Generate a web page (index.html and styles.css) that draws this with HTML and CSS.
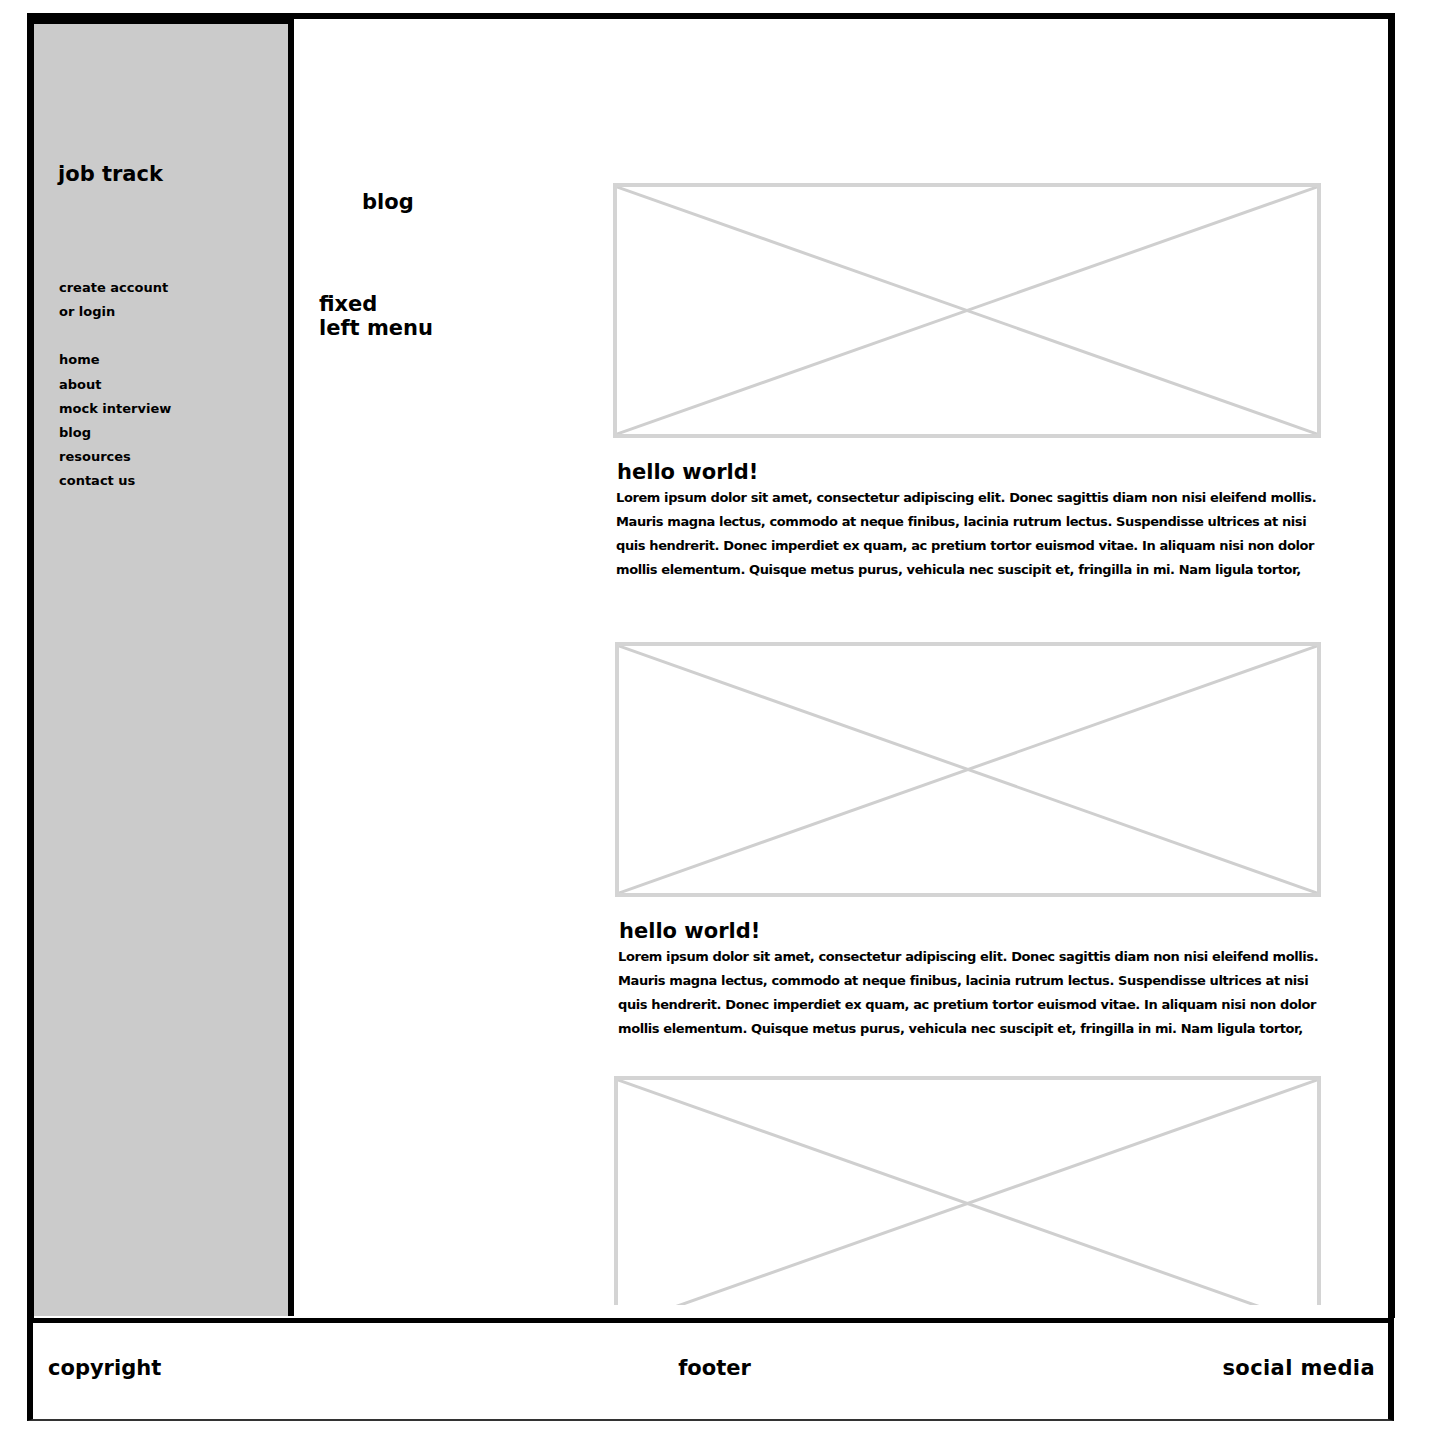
FILE: index.html
```html
<!DOCTYPE html>
<html lang="en">
<head>
    <meta charset="UTF-8">
    <meta name="viewport" content="width=device-width, initial-scale=1.0">
    <title>job track - blog</title>
    <link rel="stylesheet" href="styles.css">
</head>
<body>
    <div class="page">
        <div class="frame">
            <!-- fixed left menu -->
            <aside class="sidebar">
                <div class="logo">job track</div>
                <ul class="nav">
                    <li>create account</li>
                    <li>or login</li>
                    <li class="spacer"></li>
                    <li>home</li>
                    <li>about</li>
                    <li>mock interview</li>
                    <li>blog</li>
                    <li>resources</li>
                    <li>contact us</li>
                </ul>
            </aside>

            <main class="main">
                <div class="notes">
                    <h1 class="page-title">blog</h1>
                    <p class="note">fixed<br>left menu</p>
                </div>

                <div class="posts">
                    <article class="post">
                        <div class="placeholder">
                            <svg viewBox="0 0 100 100" preserveAspectRatio="none">
                                <line x1="0" y1="0" x2="100" y2="100"/>
                                <line x1="100" y1="0" x2="0" y2="100"/>
                            </svg>
                        </div>
                        <h2>hello world!</h2>
                        <p>Lorem ipsum dolor sit amet, consectetur adipiscing elit. Donec sagittis diam non nisi eleifend mollis.<br>
                        Mauris magna lectus, commodo at neque finibus, lacinia rutrum lectus. Suspendisse ultrices at nisi<br>
                        quis hendrerit. Donec imperdiet ex quam, ac pretium tortor euismod vitae. In aliquam nisi non dolor<br>
                        mollis elementum. Quisque metus purus, vehicula nec suscipit et, fringilla in mi. Nam ligula tortor,</p>
                    </article>

                    <article class="post shifted">
                        <div class="placeholder">
                            <svg viewBox="0 0 100 100" preserveAspectRatio="none">
                                <line x1="0" y1="0" x2="100" y2="100"/>
                                <line x1="100" y1="0" x2="0" y2="100"/>
                            </svg>
                        </div>
                        <h2>hello world!</h2>
                        <p>Lorem ipsum dolor sit amet, consectetur adipiscing elit. Donec sagittis diam non nisi eleifend mollis.<br>
                        Mauris magna lectus, commodo at neque finibus, lacinia rutrum lectus. Suspendisse ultrices at nisi<br>
                        quis hendrerit. Donec imperdiet ex quam, ac pretium tortor euismod vitae. In aliquam nisi non dolor<br>
                        mollis elementum. Quisque metus purus, vehicula nec suscipit et, fringilla in mi. Nam ligula tortor,</p>
                    </article>

                    <article class="post last">
                        <div class="placeholder">
                            <svg viewBox="0 0 100 100" preserveAspectRatio="none">
                                <line x1="0" y1="0" x2="100" y2="100"/>
                                <line x1="100" y1="0" x2="0" y2="100"/>
                            </svg>
                        </div>
                    </article>
                </div>
            </main>
        </div>

        <footer class="footer">
            <span class="copy">copyright</span>
            <span class="middle">footer</span>
            <span class="social">social media</span>
        </footer>
    </div>
</body>
</html>
```

FILE: styles.css
```css
/* wireframe: job track blog */
body {
    margin: 0;
    padding: 0;
    background-color: #fff;
    color: #000;
    font-family: "DejaVu Sans", "Liberation Sans", sans-serif;
    font-weight: bold;
}
.page {
    width: 1368px;
    margin: 13px 0 0 27px;
}
.frame {
    display: flex;
    height: 1305px;
    border: 6px solid #000;
    border-left-width: 7px;
    border-right-width: 7px;
    border-bottom: none;
    box-sizing: border-box;
}
.sidebar {
    width: 260px;
    height: 1297px;
    box-sizing: border-box;
    background-color: #cbcbcb;
    border-top: 5px solid #000;
    border-right: 6px solid #000;
    padding: 138px 0 0 24px;
}
.logo {
    font-size: 21px;
    line-height: 24px;
}
.nav {
    list-style: none;
    margin: 90px 0 0 1px;
    padding: 0;
    font-size: 13px;
    line-height: 24.2px;
}
.nav .spacer {
    height: 24px;
}
.main {
    flex: 1;
    display: flex;
    padding-bottom: 13px;
}
.notes {
    width: 294px;
    padding: 171px 0 0 25px;
}
.page-title {
    margin: 0 0 0 43px;
    font-size: 21px;
    line-height: 24px;
}
.note {
    margin: 78px 0 0;
    font-size: 21px;
    line-height: 24px;
}
.posts {
    width: 708px;
    padding-top: 164px;
    overflow: hidden;
}
.post {
    margin-bottom: 60px;
}
.post.shifted {
    margin-left: 2px;
    margin-bottom: 35px;
}
.post.last {
    margin-left: 1px;
}
.placeholder {
    height: 255px;
    border: 4px solid #d4d4d4;
    box-sizing: border-box;
}
.placeholder svg {
    display: block;
    width: 100%;
    height: 100%;
}
.placeholder line {
    stroke: #cfcfcf;
    stroke-width: 3;
    vector-effect: non-scaling-stroke;
}
.post h2 {
    margin: 22px 0 0 4px;
    font-size: 21px;
    line-height: 24px;
}
.post p {
    margin: 2px 0 0 3px;
    font-size: 13px;
    line-height: 24px;
    letter-spacing: -0.4px;
    white-space: nowrap;
}
.footer {
    display: grid;
    grid-template-columns: 1fr auto 1fr;
    align-items: center;
    height: 103px;
    box-sizing: border-box;
    border: 5px solid #000;
    border-left-width: 6px;
    border-right-width: 6px;
    border-bottom: 2px solid #333;
    margin-right: 1px;
    padding: 0 13px 6px 15px;
    font-size: 21px;
}
.footer .middle {
    text-align: center;
    margin-left: 6px;
}
.footer .social {
    justify-self: end;
    letter-spacing: 0.4px;
}
```
